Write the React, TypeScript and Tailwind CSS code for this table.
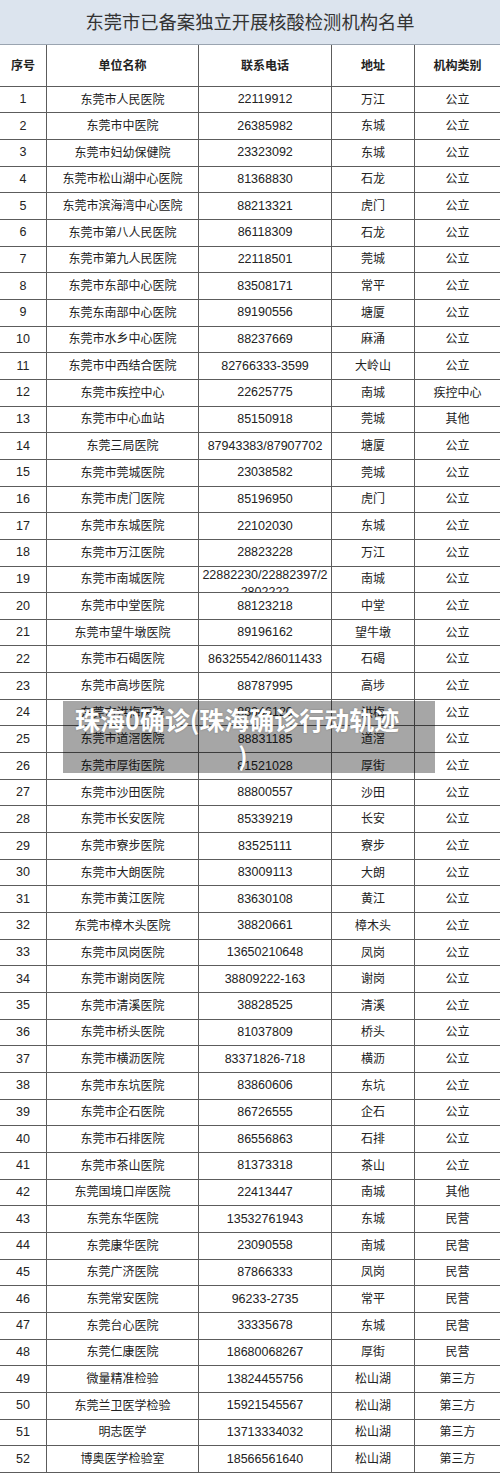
const rows: [string, string, string, string, string][] = [
  ["1", "东莞市人民医院", "22119912", "万江", "公立"],
  ["2", "东莞市中医院", "26385982", "东城", "公立"],
  ["3", "东莞市妇幼保健院", "23323092", "东城", "公立"],
  ["4", "东莞市松山湖中心医院", "81368830", "石龙", "公立"],
  ["5", "东莞市滨海湾中心医院", "88213321", "虎门", "公立"],
  ["6", "东莞市第八人民医院", "86118309", "石龙", "公立"],
  ["7", "东莞市第九人民医院", "22118501", "莞城", "公立"],
  ["8", "东莞市东部中心医院", "83508171", "常平", "公立"],
  ["9", "东莞东南部中心医院", "89190556", "塘厦", "公立"],
  ["10", "东莞市水乡中心医院", "88237669", "麻涌", "公立"],
  ["11", "东莞市中西结合医院", "82766333-3599", "大岭山", "公立"],
  ["12", "东莞市疾控中心", "22625775", "南城", "疾控中心"],
  ["13", "东莞市中心血站", "85150918", "莞城", "其他"],
  ["14", "东莞三局医院", "87943383/87907702", "塘厦", "公立"],
  ["15", "东莞市莞城医院", "23038582", "莞城", "公立"],
  ["16", "东莞市虎门医院", "85196950", "虎门", "公立"],
  ["17", "东莞市东城医院", "22102030", "东城", "公立"],
  ["18", "东莞市万江医院", "28823228", "万江", "公立"],
  ["19", "东莞市南城医院", "22882230/22882397/2", "南城", "公立"],
  ["20", "东莞市中堂医院", "88123218", "中堂", "公立"],
  ["21", "东莞市望牛墩医院", "89196162", "望牛墩", "公立"],
  ["22", "东莞市石碣医院", "86325542/86011433", "石碣", "公立"],
  ["23", "东莞市高埗医院", "88787995", "高埗", "公立"],
  ["24", "东莞市洪梅医院", "88846120", "洪梅", "公立"],
  ["25", "东莞市道滘医院", "88831185", "道滘", "公立"],
  ["26", "东莞市厚街医院", "81521028", "厚街", "公立"],
  ["27", "东莞市沙田医院", "88800557", "沙田", "公立"],
  ["28", "东莞市长安医院", "85339219", "长安", "公立"],
  ["29", "东莞市寮步医院", "83525111", "寮步", "公立"],
  ["30", "东莞市大朗医院", "83009113", "大朗", "公立"],
  ["31", "东莞市黄江医院", "83630108", "黄江", "公立"],
  ["32", "东莞市樟木头医院", "38820661", "樟木头", "公立"],
  ["33", "东莞市凤岗医院", "13650210648", "凤岗", "公立"],
  ["34", "东莞市谢岗医院", "38809222-163", "谢岗", "公立"],
  ["35", "东莞市清溪医院", "38828525", "清溪", "公立"],
  ["36", "东莞市桥头医院", "81037809", "桥头", "公立"],
  ["37", "东莞市横沥医院", "83371826-718", "横沥", "公立"],
  ["38", "东莞市东坑医院", "83860606", "东坑", "公立"],
  ["39", "东莞市企石医院", "86726555", "企石", "公立"],
  ["40", "东莞市石排医院", "86556863", "石排", "公立"],
  ["41", "东莞市茶山医院", "81373318", "茶山", "公立"],
  ["42", "东莞国境口岸医院", "22413447", "南城", "其他"],
  ["43", "东莞东华医院", "13532761943", "东城", "民营"],
  ["44", "东莞康华医院", "23090558", "南城", "民营"],
  ["45", "东莞广济医院", "87866333", "凤岗", "民营"],
  ["46", "东莞常安医院", "96233-2735", "常平", "民营"],
  ["47", "东莞台心医院", "33335678", "东城", "民营"],
  ["48", "东莞仁康医院", "18680068267", "厚街", "民营"],
  ["49", "微量精准检验", "13824455756", "松山湖", "第三方"],
  ["50", "东莞兰卫医学检验", "15921545567", "松山湖", "第三方"],
  ["51", "明志医学", "13713334032", "松山湖", "第三方"],
  ["52", "博奥医学检验室", "18566561640", "松山湖", "第三方"],
];

const headers = ["序号", "单位名称", "联系电话", "地址", "机构类别"];

const cell = "flex items-center justify-center border-b border-r border-[#5c5c5c] overflow-hidden";

export default function App() {
  return (
    <div className="relative w-[500px] bg-white text-[#222] font-['Liberation_Sans','Noto_Sans_CJK_SC',sans-serif]">
      {/* title */}
      <div className="flex h-[45px] items-center justify-center border-b border-[#9aa4b0] bg-[#dce4ee] font-['Noto_Sans_CJK_SC',sans-serif] text-[18.3px] text-[#333]">
        东莞市已备案独立开展核酸检测机构名单
      </div>

      <div className="grid grid-cols-[47px_152px_133px_83px_85px]">
        {headers.map((h, i) => (
          <div
            key={h}
            className={`${cell} h-[41.7px] font-['Noto_Sans_CJK_SC',sans-serif] text-[12px] font-bold ${i === 4 ? "border-r-0" : ""}`}
          >
            {h}
          </div>
        ))}

        {rows.map((r) => (
          <div key={r[0]} className="contents">
            <div className={`${cell} h-[26.67px] text-[12.5px]`}>{r[0]}</div>
            <div className={`${cell} h-[26.67px] text-[12px]`}>{r[1]}</div>
            {r[0] === "19" ? (
              <div className={`${cell} h-[26.67px] items-start text-[12.5px]`}>
                <div className="text-center leading-[17px]">
                  {r[2]}
                  <br />
                  2802222
                </div>
              </div>
            ) : (
              <div className={`${cell} h-[26.67px] text-[12.5px]`}>{r[2]}</div>
            )}
            <div className={`${cell} h-[26.67px] text-[12px]`}>{r[3]}</div>
            <div className={`${cell} h-[26.67px] border-r-0 text-[12px]`}>{r[4]}</div>
          </div>
        ))}
      </div>

      {/* watermark caption */}
      <div className="absolute left-[63px] top-[701px] flex h-[72px] w-[372px] flex-col bg-black/35 font-['Noto_Sans_CJK_SC',sans-serif] text-[25px] font-bold text-white [text-shadow:0_0_2px_rgba(0,0,0,0.25)]">
        <div className="pl-3 leading-[36px]">珠海0确诊(珠海确诊行动轨迹</div>
        <div className="pr-3 text-center leading-[36px]">)</div>
      </div>
    </div>
  );
}
